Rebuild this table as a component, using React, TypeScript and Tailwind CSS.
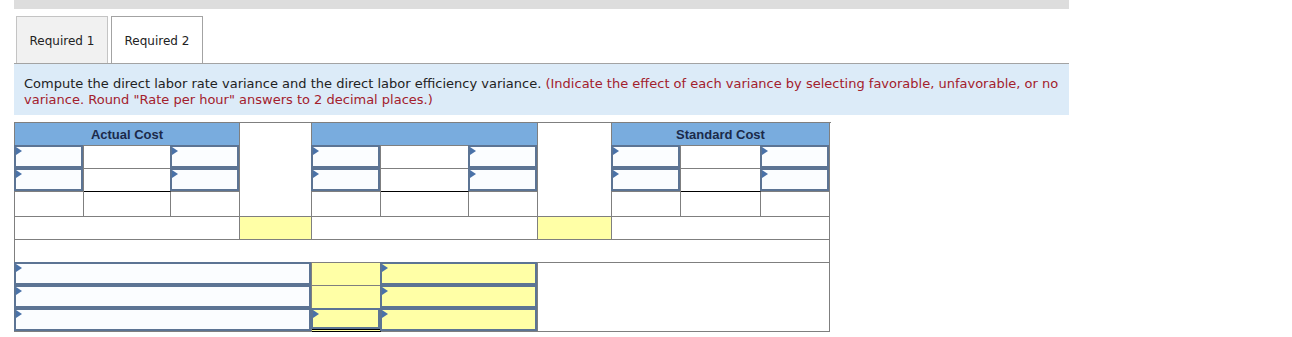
import React from 'react';

type Cell = {
  col: string;
  row: string;
  kind?: 'head' | 'plain' | 'input' | 'yellow' | 'yellowInput';
  label?: string;
  extra?: string;
};

// column / row placement classes written out so Tailwind picks them up
const cells: Cell[] = [
  // header row
  { col: 'col-start-1 col-span-3', row: 'row-start-1', kind: 'head', label: 'Actual Cost' },
  { col: 'col-start-4', row: 'row-start-1 row-span-4' },
  { col: 'col-start-5 col-span-3', row: 'row-start-1', kind: 'head' },
  { col: 'col-start-8', row: 'row-start-1 row-span-4' },
  { col: 'col-start-9 col-span-3', row: 'row-start-1', kind: 'head', label: 'Standard Cost' },

  // two input rows
  { col: 'col-start-1', row: 'row-start-2', kind: 'input' },
  { col: 'col-start-2', row: 'row-start-2' },
  { col: 'col-start-3', row: 'row-start-2', kind: 'input' },
  { col: 'col-start-5', row: 'row-start-2', kind: 'input' },
  { col: 'col-start-6', row: 'row-start-2' },
  { col: 'col-start-7', row: 'row-start-2', kind: 'input' },
  { col: 'col-start-9', row: 'row-start-2', kind: 'input' },
  { col: 'col-start-10', row: 'row-start-2' },
  { col: 'col-start-11', row: 'row-start-2', kind: 'input' },

  { col: 'col-start-1', row: 'row-start-3', kind: 'input' },
  { col: 'col-start-2', row: 'row-start-3', extra: 'border-b-black' },
  { col: 'col-start-3', row: 'row-start-3', kind: 'input' },
  { col: 'col-start-5', row: 'row-start-3', kind: 'input' },
  { col: 'col-start-6', row: 'row-start-3', extra: 'border-b-black' },
  { col: 'col-start-7', row: 'row-start-3', kind: 'input' },
  { col: 'col-start-9', row: 'row-start-3', kind: 'input' },
  { col: 'col-start-10', row: 'row-start-3', extra: 'border-b-black' },
  { col: 'col-start-11', row: 'row-start-3', kind: 'input' },

  // totals
  { col: 'col-start-1', row: 'row-start-4' },
  { col: 'col-start-2', row: 'row-start-4' },
  { col: 'col-start-3', row: 'row-start-4' },
  { col: 'col-start-5', row: 'row-start-4' },
  { col: 'col-start-6', row: 'row-start-4' },
  { col: 'col-start-7', row: 'row-start-4' },
  { col: 'col-start-9', row: 'row-start-4' },
  { col: 'col-start-10', row: 'row-start-4' },
  { col: 'col-start-11', row: 'row-start-4' },

  { col: 'col-start-1 col-span-3', row: 'row-start-5' },
  { col: 'col-start-4', row: 'row-start-5', kind: 'yellow' },
  { col: 'col-start-5 col-span-3', row: 'row-start-5' },
  { col: 'col-start-8', row: 'row-start-5', kind: 'yellow' },
  { col: 'col-start-9 col-span-3', row: 'row-start-5' },

  { col: 'col-start-1 col-span-11', row: 'row-start-6' },

  // variance rows
  { col: 'col-start-1 col-span-4', row: 'row-start-7', kind: 'input' },
  { col: 'col-start-5', row: 'row-start-7', kind: 'yellow' },
  { col: 'col-start-6 col-span-2', row: 'row-start-7', kind: 'yellowInput' },
  { col: 'col-start-8 col-span-4', row: 'row-start-7 row-span-3' },

  { col: 'col-start-1 col-span-4', row: 'row-start-8', kind: 'input' },
  { col: 'col-start-5', row: 'row-start-8', kind: 'yellow', extra: 'border-b-black' },
  { col: 'col-start-6 col-span-2', row: 'row-start-8', kind: 'yellowInput' },

  { col: 'col-start-1 col-span-4', row: 'row-start-9', kind: 'input' },
  { col: 'col-start-5', row: 'row-start-9', kind: 'yellowInput', extra: 'border-b-[3px] border-b-black border-double' },
  { col: 'col-start-6 col-span-2', row: 'row-start-9', kind: 'yellowInput' },
];

function Arrow() {
  return (
    <svg className="absolute left-0 top-0" width="6" height="8" viewBox="0 0 6 8">
      <path d="M0 0 L6 4 L0 8 Z" fill="#4a72a8" />
    </svg>
  );
}

function GridCell({ col, row, kind = 'plain', label, extra = '' }: Cell) {
  const bg = kind === 'yellow' || kind === 'yellowInput' ? 'bg-[#ffffa6]' : kind === 'head' ? 'bg-[#79acde]' : 'bg-white';
  return (
    <div className={`${col} ${row} ${bg} border-r border-b border-[#7f7f7f] ${extra} relative`}>
      {kind === 'head' && (
        <div className="flex h-full items-center justify-center pt-px font-['Liberation_Sans',Arial,sans-serif] text-[13px] font-bold text-[#1b2a4a]">
          {label}
        </div>
      )}
      {(kind === 'input' || kind === 'yellowInput') && (
        <div className={`absolute inset-0 -left-px -top-px border-2 border-[#5c7494] ${kind === 'input' ? 'bg-[#fbfdff]' : 'bg-[#ffffa6]'}`}>
          <Arrow />
        </div>
      )}
    </div>
  );
}

export default function App() {
  return (
    <div className="w-[1292px] h-[337px] bg-white pl-[14px] font-['DejaVu_Sans',Verdana,sans-serif]">
      <div className="w-[1055px]">
        <div className="h-[9px] bg-[#dddddd]" />

        <div className="mt-[7px] flex gap-[3px] pl-[2px] text-[12px] text-[#222]">
          <div className="flex h-[47px] w-[92px] items-center justify-center border border-b-0 border-[#c4c4c4] bg-[#f1f1f1] pt-[2px]">
            Required 1
          </div>
          <div className="flex h-[47px] w-[92px] items-center justify-center border border-b-0 border-[#a3a3a3] bg-white pt-[2px]">
            Required 2
          </div>
        </div>

        <p className="border-t border-[#a3a3a3] bg-[#dcebf8] h-[52px] pl-[10px] pr-[8px] pt-[12px] text-[13px] leading-[16px] text-[#222]">
          Compute the direct labor rate variance and the direct labor efficiency variance.{' '}
          <span className="text-[#a3202c]">
            (Indicate the effect of each variance by selecting favorable, unfavorable, or no variance. Round "Rate per
            hour" answers to 2 decimal places.)
          </span>
        </p>
      </div>

      <div className="mt-[7px] grid w-[817px] grid-cols-[69px_87px_69px_72px_69px_88px_69px_74px_69px_80px_69px] grid-rows-[23px_23px_23px_25px_23px_23px_23px_23px_23px] border-l border-t border-[#7f7f7f]">
        {cells.map((c, i) => (
          <GridCell key={i} {...c} />
        ))}
      </div>
    </div>
  );
}
